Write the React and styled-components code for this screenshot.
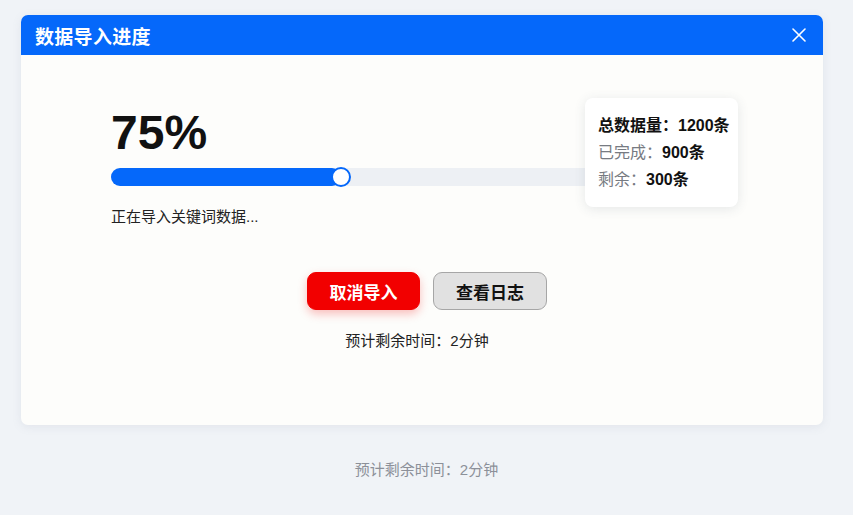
import React from "react";
import styled, { createGlobalStyle } from "styled-components";

const Global = createGlobalStyle`
  html, body { margin: 0; padding: 0; }
  body {
    background: #f0f3f7;
    font-family: "Liberation Sans", "Noto Sans CJK SC", sans-serif;
    width: 853px;
    height: 515px;
    overflow: hidden;
  }
`;

const Page = styled.div`
  padding: 15px 0 0 21px;
  display: flex;
  flex-direction: column;
`;

const Card = styled.div`
  width: 802px;
  height: 410px;
  background: #fdfdfb;
  border-radius: 7px;
  overflow: hidden;
  box-shadow: 0 2px 10px rgba(120, 135, 160, 0.12);
  display: flex;
  flex-direction: column;
`;

const Header = styled.div`
  height: 40px;
  background: #0568fa;
  display: flex;
  align-items: center;
  justify-content: space-between;
  padding: 0 16px 0 14px;
`;

const Title = styled.div`
  color: #fff;
  font-size: 19px;
  font-weight: 700;
  letter-spacing: 0.3px;
`;

const Close = styled.button`
  border: 0;
  background: none;
  padding: 0;
  width: 16px;
  height: 16px;
  display: flex;
  align-items: center;
  justify-content: center;
  cursor: pointer;
`;

const Body = styled.div`
  position: relative;
  flex: 1;
  padding: 54px 0 0 90px;
  display: flex;
  flex-direction: column;
`;

const Percent = styled.div`
  font-size: 48px;
  line-height: 48px;
  font-weight: 700;
  color: #111;
`;

const Track = styled.div`
  position: relative;
  margin-top: 11px;
  width: 610px;
  height: 18px;
  border-radius: 9px;
  background: #edf0f4;
`;

const Fill = styled.div`
  height: 100%;
  border-radius: 9px;
  background: #0568fa;
`;

const Knob = styled.div`
  position: absolute;
  top: -1px;
  width: 20px;
  height: 20px;
  margin-left: -10px;
  box-sizing: border-box;
  border-radius: 50%;
  background: #fff;
  border: 2.5px solid #0568fa;
`;

const Status = styled.div`
  margin-top: 21px;
  font-size: 15px;
  line-height: 20px;
  color: #222;
`;

const Actions = styled.div`
  margin: 45px 0 0 -80px;
  display: flex;
  justify-content: center;
  gap: 13px;
`;

const Button = styled.button`
  height: 38px;
  width: ${(p) => (p.$primary ? "113px" : "114px")};
  border-radius: 9px;
  font-family: inherit;
  font-size: 17px;
  font-weight: 700;
  cursor: pointer;
  border: 1px solid ${(p) => (p.$primary ? "#f20000" : "#a6a6a6")};
  background: ${(p) => (p.$primary ? "#f20000" : "#e1e1e1")};
  color: ${(p) => (p.$primary ? "#fff" : "#111")};
  box-shadow: ${(p) =>
    p.$primary ? "0 4px 10px rgba(240, 0, 0, 0.25)" : "none"};
`;

const Eta = styled.div`
  margin: 21px 0 0 -100px;
  text-align: center;
  font-size: 15px;
  line-height: 20px;
  color: #222;
`;

const Tooltip = styled.div`
  position: absolute;
  top: 43px;
  left: 564px;
  width: 153px;
  height: 109px;
  box-sizing: border-box;
  padding: 14px 0 0 13px;
  background: #fff;
  border-radius: 8px;
  box-shadow: 0 2px 12px rgba(60, 70, 90, 0.12);
`;

const StatLine = styled.div`
  font-size: 16px;
  line-height: 27px;
  white-space: nowrap;
  color: #111;
  font-weight: 700;
`;

const StatLabel = styled.span`
  font-weight: ${(p) => (p.$strong ? 700 : 400)};
  color: ${(p) => (p.$strong ? "#111" : "#777b82")};
`;

const Footer = styled.div`
  margin: 33px 0 0 -21px;
  width: 853px;
  text-align: center;
  font-size: 15px;
  color: #8c9099;
`;

export default function App() {
  const fillWidth = 230;
  return (
    <>
      <Global />
      <Page>
        <Card>
          <Header>
            <Title>数据导入进度</Title>
            <Close aria-label="close">
              <svg width="14" height="14" viewBox="0 0 14 14">
                <path
                  d="M1 1 L13 13 M13 1 L1 13"
                  stroke="#fff"
                  strokeWidth="1.6"
                  strokeLinecap="round"
                />
              </svg>
            </Close>
          </Header>
          <Body>
            <Percent>75%</Percent>
            <Track>
              <Fill style={{ width: fillWidth }} />
              <Knob style={{ left: fillWidth }} />
            </Track>
            <Status>正在导入关键词数据...</Status>
            <Actions>
              <Button $primary>取消导入</Button>
              <Button>查看日志</Button>
            </Actions>
            <Eta>预计剩余时间：2分钟</Eta>
            <Tooltip>
              <StatLine>
                <StatLabel $strong>总数据量：</StatLabel>1200条
              </StatLine>
              <StatLine>
                <StatLabel>已完成：</StatLabel>900条
              </StatLine>
              <StatLine>
                <StatLabel>剩余：</StatLabel>300条
              </StatLine>
            </Tooltip>
          </Body>
        </Card>
        <Footer>预计剩余时间：2分钟</Footer>
      </Page>
    </>
  );
}
